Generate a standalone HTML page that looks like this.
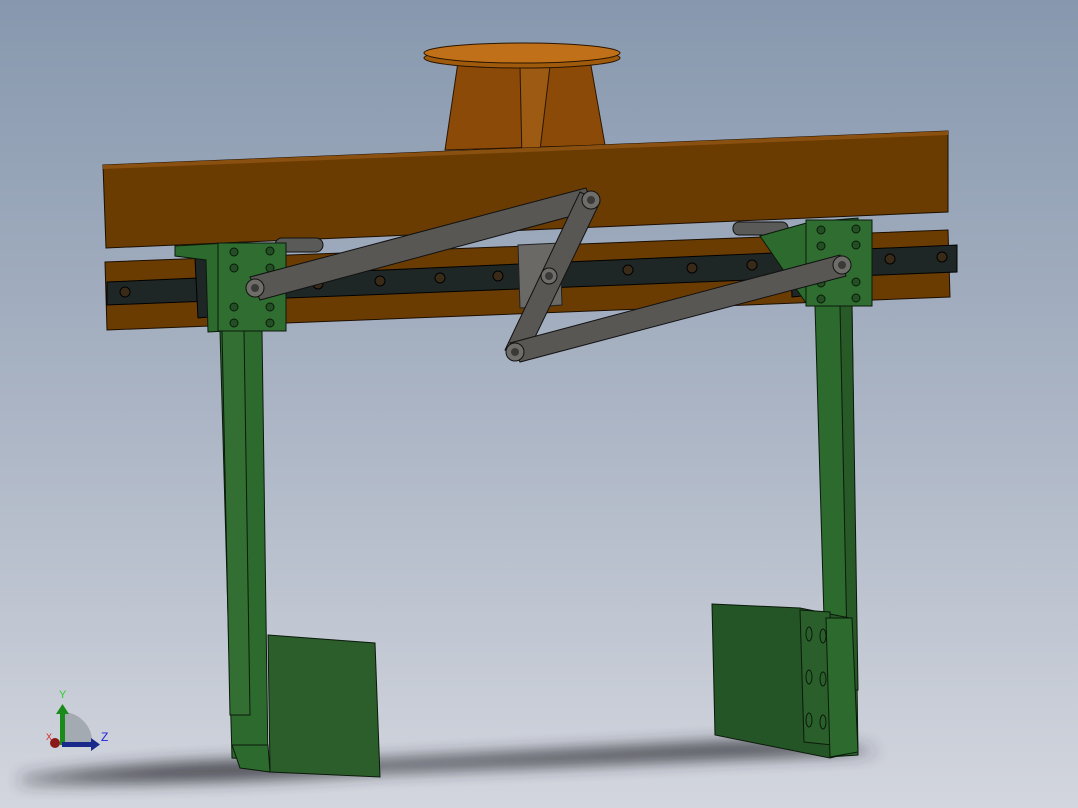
<!DOCTYPE html>
<html><head><meta charset="utf-8"><style>
html,body{margin:0;padding:0;width:1078px;height:808px;overflow:hidden}
</style></head><body>
<svg width="1078" height="808" viewBox="0 0 1078 808" xmlns="http://www.w3.org/2000/svg" font-family="Liberation Sans, sans-serif">
<defs>
<linearGradient id="bg" x1="0" y1="0" x2="0" y2="1">
<stop offset="0" stop-color="#8798ae"/><stop offset="0.5" stop-color="#aab4c4"/><stop offset="1" stop-color="#d3d6de"/>
</linearGradient>
<filter id="bl" x="-20%" y="-200%" width="140%" height="500%"><feGaussianBlur stdDeviation="8"/></filter>
</defs>
<rect width="1078" height="808" fill="url(#bg)"/>
<!-- shadows -->
<path d="M20 778 Q200 755 380 760 L720 742 Q800 738 860 748 L880 752 Q700 760 380 772 Q200 785 20 782Z" fill="#2a2a30" filter="url(#bl)" opacity="0.85"/>
<!-- top disc & cone -->
<polygon points="458,62 590,60 605,145 445,150" fill="#8b4a08" stroke="#2a1500" stroke-width="1"/>
<polygon points="520,66 550,66 540,150 522,160" fill="#9c5a12" stroke="#2a1500" stroke-width="1"/>
<ellipse cx="522" cy="58" rx="98" ry="10" fill="#a05a0c" stroke="#2a1500"/>
<ellipse cx="522" cy="53" rx="98" ry="10" fill="#c07018" stroke="#2a1500"/>
<!-- main beam -->
<polygon points="103,165 948,131 948,212 106,248" fill="#6b3c02" stroke="#1c0e00"/>
<polygon points="103,165 948,131 948,135 103,169" fill="#8a5010"/>
<!-- lower beam -->
<polygon points="105,262 948,230 950,297 107,330" fill="#6b3c02" stroke="#1c0e00"/>
<!-- rail -->
<polygon points="107,282 957,245 957,272 107,305" fill="#1e2725" stroke="#000"/>
<g fill="#3a2a18" stroke="#000" stroke-width="1">
<circle cx="125" cy="292" r="5"/><circle cx="318" cy="284" r="5"/><circle cx="380" cy="281" r="5"/><circle cx="440" cy="278" r="5"/><circle cx="498" cy="276" r="5"/><circle cx="628" cy="270" r="5"/><circle cx="692" cy="268" r="5"/><circle cx="752" cy="265" r="5"/><circle cx="890" cy="259" r="5"/><circle cx="942" cy="257" r="5"/>
</g>
<!-- rods -->
<rect x="275" y="238" width="48" height="14" rx="7" fill="#5a5a58" stroke="#111"/>
<rect x="733" y="222" width="55" height="13" rx="6" fill="#5a5a58" stroke="#111"/>
<!-- left carriage -->
<polygon points="195,258 220,256 220,316 198,318" fill="#1e2725" stroke="#000"/>
<polygon points="175,246 245,242 246,330 208,332 206,260 175,256" fill="#2d6a2e" stroke="#0b1a0b"/>
<rect x="218" y="243" width="68" height="88" fill="#2f6e30" stroke="#0b1a0b"/>
<g fill="#244f24" stroke="#0b1a0b"><circle cx="234" cy="252" r="4"/><circle cx="270" cy="251" r="4"/><circle cx="234" cy="268" r="4"/><circle cx="270" cy="268" r="4"/><circle cx="234" cy="307" r="4"/><circle cx="270" cy="307" r="4"/><circle cx="234" cy="323" r="4"/><circle cx="270" cy="323" r="4"/></g>
<!-- right carriage -->
<polygon points="790,238 812,236 812,295 792,297" fill="#1e2725" stroke="#000"/>
<polygon points="760,236 810,222 858,218 860,305 808,306" fill="#2d6a2e" stroke="#0b1a0b"/>
<rect x="806" y="220" width="66" height="86" fill="#2f6e30" stroke="#0b1a0b"/>
<g fill="#244f24" stroke="#0b1a0b"><circle cx="821" cy="230" r="4"/><circle cx="856" cy="229" r="4"/><circle cx="821" cy="246" r="4"/><circle cx="856" cy="245" r="4"/><circle cx="821" cy="283" r="4"/><circle cx="856" cy="282" r="4"/><circle cx="821" cy="299" r="4"/><circle cx="856" cy="298" r="4"/></g>
<!-- left leg -->
<polygon points="220,331 262,331 268,760 232,758" fill="#2d6a2e" stroke="#0b1a0b"/>
<polygon points="222,331 244,331 250,715 230,715" fill="#336f33" stroke="#0b1a0b"/>
<polygon points="268,635 375,643 380,777 270,772" fill="#2b5e2b" stroke="#0b1a0b"/>
<polygon points="232,745 268,745 270,772 240,768" fill="#2d6a2e" stroke="#0b1a0b"/>
<!-- right leg -->
<polygon points="815,306 852,306 858,755 828,757" fill="#2d6a2e" stroke="#0b1a0b"/>
<polygon points="840,306 852,306 858,690 848,690" fill="#285a28" stroke="#0b1a0b"/>
<polygon points="712,604 800,608 850,618 855,752 830,758 715,735" fill="#245526" stroke="#0b1a0b"/>
<polygon points="800,610 830,612 832,745 804,742" fill="#2a5f2b" stroke="#0b1a0b"/>
<polygon points="826,618 852,618 858,752 830,757" fill="#2d6a2e" stroke="#0b1a0b"/>
<g fill="none" stroke="#0b1a0b"><ellipse cx="809" cy="634" rx="3" ry="7"/><ellipse cx="823" cy="636" rx="3" ry="7"/><ellipse cx="809" cy="677" rx="3" ry="7"/><ellipse cx="823" cy="679" rx="3" ry="7"/><ellipse cx="809" cy="720" rx="3" ry="7"/><ellipse cx="823" cy="722" rx="3" ry="7"/></g>
<!-- center slider -->
<polygon points="518,245 560,243 562,305 520,308" fill="#6a6966" stroke="#222"/>
<!-- links -->
<g stroke="#111" stroke-width="1" fill="#585754">
<polygon points="250,277 586,188 594,210 260,300"/>
<polygon points="580,192 600,202 524,360 505,350"/>
<polygon points="510,343 840,255 846,276 520,362"/>
</g>
<g fill="#6e6d6a" stroke="#111"><circle cx="255" cy="288" r="9"/><circle cx="591" cy="200" r="9"/><circle cx="549" cy="276" r="8"/><circle cx="515" cy="352" r="9"/><circle cx="842" cy="265" r="9"/></g>
<g fill="#3a3a38"><circle cx="255" cy="288" r="4"/><circle cx="591" cy="200" r="4"/><circle cx="549" cy="276" r="4"/><circle cx="515" cy="352" r="4"/><circle cx="842" cy="265" r="4"/></g>
<!-- triad -->
<path d="M62 745 L62 712 A30 30 0 0 1 92 745Z" fill="#9aa0a8" opacity="0.8"/>
<rect x="60" y="713" width="5" height="32" fill="#1a8a1a"/>
<polygon points="56,714 69,714 62.5,704" fill="#1a8a1a"/>
<rect x="62" y="742" width="30" height="5" fill="#1a2a8a"/>
<polygon points="91,738 91,751 100,744.5" fill="#1a2a8a"/>
<circle cx="55" cy="743" r="5" fill="#8a1a1a"/>
<text x="59" y="698" font-size="11" fill="#2ad02a">Y</text>
<text x="101" y="741" font-size="12" fill="#2020e0">Z</text>
<text x="46" y="740" font-size="9" fill="#e02020">X</text>
</svg>
</body></html>
